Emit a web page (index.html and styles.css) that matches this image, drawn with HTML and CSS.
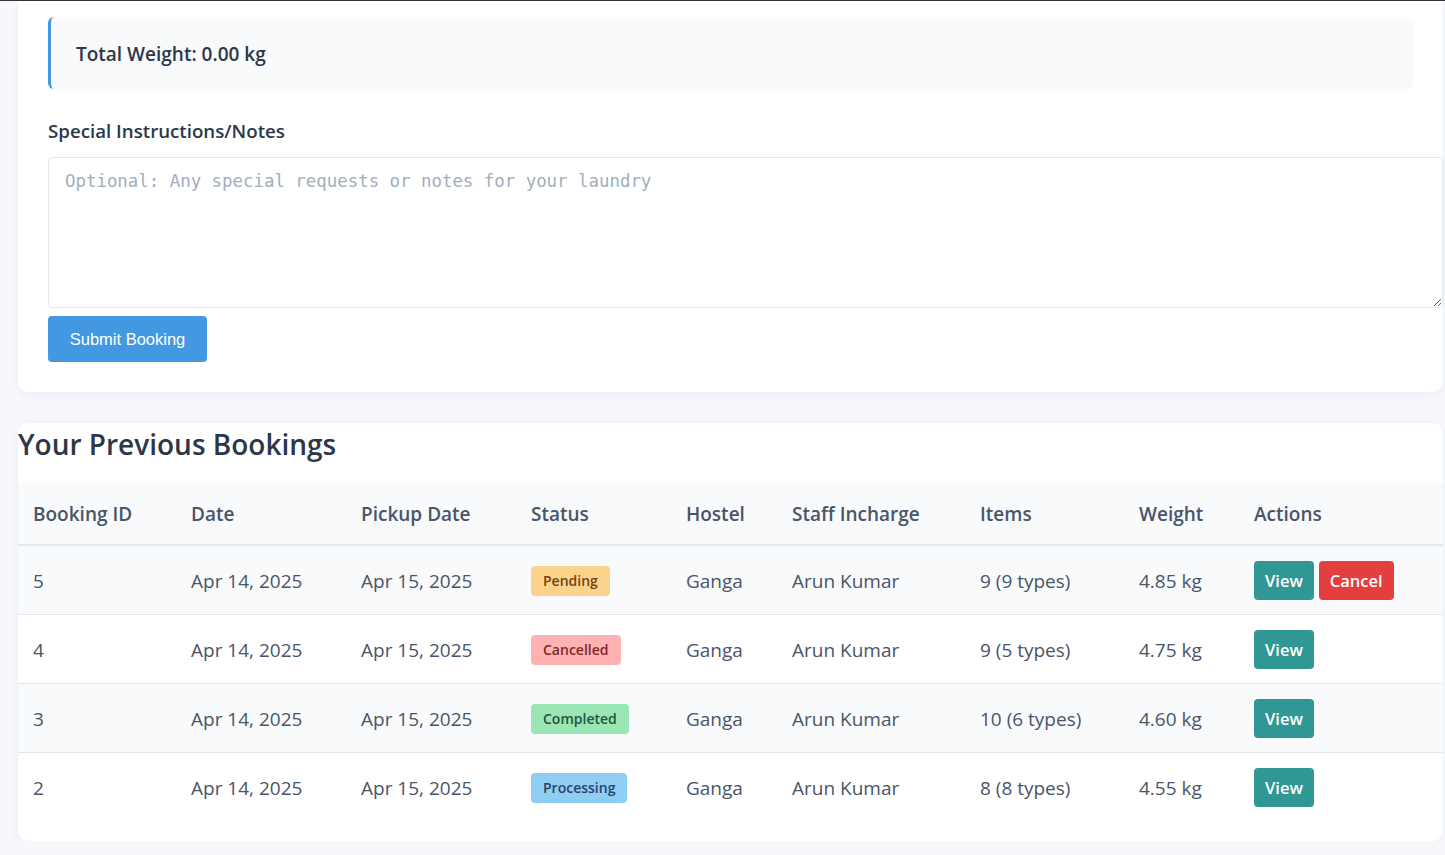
FILE: index.html
```html
<!DOCTYPE html>
<html>
<head>
<meta charset="utf-8">
<link rel="stylesheet" href="styles.css">
</head>
<body>
<div class="topline"></div>
<div class="page">
  <section class="card form-card">
    <div class="total-box">Total Weight: 0.00 kg</div>
    <label class="field-label" for="notes">Special Instructions/Notes</label>
    <textarea id="notes" class="notes" placeholder="Optional: Any special requests or notes for your laundry"></textarea>
    <button class="btn-submit">Submit Booking</button>
  </section>

  <section class="card list-card">
    <h2 class="list-title">Your Previous Bookings</h2>
    <table class="bookings">
      <thead>
        <tr>
          <th class="c-id">Booking ID</th>
          <th class="c-date">Date</th>
          <th class="c-pick">Pickup Date</th>
          <th class="c-status">Status</th>
          <th class="c-hostel">Hostel</th>
          <th class="c-staff">Staff Incharge</th>
          <th class="c-items">Items</th>
          <th class="c-weight">Weight</th>
          <th class="c-actions">Actions</th>
        </tr>
      </thead>
      <tbody>
        <tr>
          <td>5</td><td>Apr 14, 2025</td><td>Apr 15, 2025</td>
          <td><span class="badge pending">Pending</span></td>
          <td>Ganga</td><td>Arun Kumar</td><td>9 (9 types)</td><td>4.85 kg</td>
          <td><div class="actions"><button class="btn btn-view">View</button><button class="btn btn-cancel">Cancel</button></div></td>
        </tr>
        <tr>
          <td>4</td><td>Apr 14, 2025</td><td>Apr 15, 2025</td>
          <td><span class="badge cancelled">Cancelled</span></td>
          <td>Ganga</td><td>Arun Kumar</td><td>9 (5 types)</td><td>4.75 kg</td>
          <td><div class="actions"><button class="btn btn-view">View</button></div></td>
        </tr>
        <tr>
          <td>3</td><td>Apr 14, 2025</td><td>Apr 15, 2025</td>
          <td><span class="badge completed">Completed</span></td>
          <td>Ganga</td><td>Arun Kumar</td><td>10 (6 types)</td><td>4.60 kg</td>
          <td><div class="actions"><button class="btn btn-view">View</button></div></td>
        </tr>
        <tr>
          <td>2</td><td>Apr 14, 2025</td><td>Apr 15, 2025</td>
          <td><span class="badge processing">Processing</span></td>
          <td>Ganga</td><td>Arun Kumar</td><td>8 (8 types)</td><td>4.55 kg</td>
          <td><div class="actions"><button class="btn btn-view">View</button></div></td>
        </tr>
      </tbody>
    </table>
  </section>
</div>
</body>
</html>
```

FILE: styles.css
```css
* { box-sizing: border-box; }
html, body { margin: 0; padding: 0; }
body {
  background: #f6f8fc;
  font-family: "Open Sans", "Noto Sans", sans-serif;
  color: #4a5568;
  overflow: hidden;
}
.topline { height: 1px; background: #333; }
.page {
  margin-left: 18px;
  width: 1425px;
  display: flex;
  flex-direction: column;
  gap: 31px;
}
.card {
  background: #fff;
  border-radius: 10px;
  box-shadow: 0 2px 8px rgba(40, 50, 90, 0.06);
}
.form-card {
  border-radius: 0 0 10px 10px;
  padding: 16px 30px 30px;
  display: flex;
  flex-direction: column;
  align-items: flex-start;
}
.total-box {
  width: 100%;
  background: #f8fafc;
  border-left: 3px solid #4299e1;
  border-radius: 6px;
  padding: 24px 25px 21px;
  font-size: 19px;
  font-weight: 600;
  line-height: 27px;
  color: #2d3748;
}
.field-label {
  margin-top: 29px;
  font-size: 18.7px;
  font-weight: 600;
  color: #2d3748;
  line-height: 26px;
}
.notes {
  margin-top: 13px;
  width: calc(100% + 30px);
  height: 151px;
  border: 1px solid #e2e8f0;
  border-radius: 4px;
  padding: 13px 16px;
  font-family: "DejaVu Sans Mono", monospace;
  font-size: 17.4px;
  color: #2d3748;
  resize: vertical;
}
.notes::placeholder { color: #a0aec0; }
.btn-submit {
  margin-top: 8px;
  width: 159px;
  height: 46px;
  background: #4299e1;
  color: #fff;
  border: none;
  border-radius: 4px;
  font-family: "Liberation Sans", Arial, sans-serif;
  font-size: 16.5px;
}
.list-card { padding-bottom: 20px; }
.list-title {
  margin: 3px 0 0;
  font-size: 28px;
  font-weight: 600;
  line-height: 37px;
  color: #2d3748;
}
.bookings {
  margin-top: 20px;
  width: 100%;
  border-collapse: collapse;
  table-layout: fixed;
}
.bookings th {
  background: #f8fafc;
  text-align: left;
  font-weight: 600;
  font-size: 19px;
  color: #4a5568;
  height: 62px;
  padding: 0 15px;
  border-bottom: 2px solid #e2e8f0;
}
.bookings td {
  font-size: 19px;
  height: 69px;
  padding: 2px 15px 0;
  border-bottom: 1px solid #e2e8f0;
  color: #4a5568;
  white-space: nowrap;
}
.bookings tbody tr:nth-child(odd) td { background: #f8fafc; }
.bookings tbody tr:last-child td { border-bottom: none; }
.c-id { width: 158px; }
.c-date { width: 170px; }
.c-pick { width: 170px; }
.c-status { width: 155px; }
.c-hostel { width: 106px; }
.c-staff { width: 188px; }
.c-items { width: 159px; }
.c-weight { width: 115px; }
.c-actions { width: 204px; }
.badge {
  display: inline-block;
  padding: 4px 12px;
  border-radius: 4px;
  font-size: 14px;
  font-weight: 600;
  line-height: 22px;
}
.pending { background: #fbd38d; color: #744210; }
.cancelled { background: #feb2b2; color: #822727; }
.completed { background: #9ae6b4; color: #22543d; }
.processing { background: #90cdf4; color: #2a4365; }
.actions { display: flex; gap: 5px; }
.btn {
  height: 39px;
  padding: 0 11px;
  border: none;
  border-radius: 4px;
  color: #fff;
  font-family: "Open Sans", "Noto Sans", sans-serif;
  font-size: 16.5px;
  font-weight: 600;
}
.btn-view { background: #319795; }
.btn-cancel { background: #e53e3e; }
```
